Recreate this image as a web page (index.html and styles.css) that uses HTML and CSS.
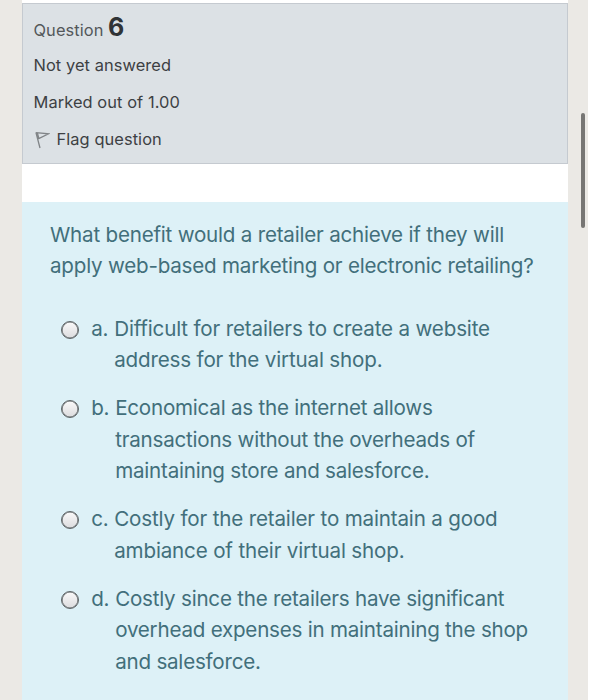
FILE: index.html
```html
<!DOCTYPE html>
<html lang="en">
<head>
<meta charset="utf-8">
<title>Question 6</title>
<link rel="stylesheet" href="styles.css">
</head>
<body>
<main class="page">
  <section class="info">
    <h3 class="info-title">Question <span class="number">6</span></h3>
    <div class="info-row state">Not yet answered</div>
    <div class="info-row grade">Marked out of 1.00</div>
    <div class="info-row flag">
      <svg class="flag-icon" viewBox="0 0 16 18" width="16" height="18"><path d="M1.9 1.3 6 17M3.4 1.8 5 8.2M2 1.6 14.6 2.8 5.2 7.4" fill="none" stroke="#808487" stroke-width="1.3"/></svg>
      <span>Flag question</span>
    </div>
  </section>
  <section class="formulation">
    <p class="prompt">What benefit would a retailer achieve if they will<br>apply web-based marketing or electronic retailing?</p>
    <div class="answers">
      <label class="answer"><input type="radio" name="q6" class="radio"><span class="letter">a.</span><span class="text short">Difficult for retailers to create a website<br>address for the virtual shop.</span></label>
      <label class="answer wide"><input type="radio" name="q6" class="radio"><span class="letter">b.</span><span class="text">Economical as the internet allows<br>transactions without the overheads of<br>maintaining store and salesforce.</span></label>
      <label class="answer"><input type="radio" name="q6" class="radio"><span class="letter">c.</span><span class="text short">Costly for the retailer to maintain a good<br>ambiance of their virtual shop.</span></label>
      <label class="answer wide"><input type="radio" name="q6" class="radio"><span class="letter">d.</span><span class="text">Costly since the retailers have significant<br>overhead expenses in maintaining the shop<br>and salesforce.</span></label>
    </div>
  </section>
</main>
<div class="scroll-thumb"></div>
</body>
</html>
```
FILE: styles.css
```css
* { box-sizing: border-box; }
html { background: #fff; overflow: hidden; }
body {
  margin: 0;
  width: 588px;
  height: 700px;
  overflow: hidden;
  background: #ebe9e5;
  font-family: Inter, "Liberation Sans", sans-serif;
}
.page {
  width: 546px;
  height: 700px;
  margin-left: 22px;
  padding-top: 3px;
  background: #fff;
}
.info {
  height: 161px;
  padding: 7px 10.5px 0;
  border: 1px solid #c5cad0;
  background: #dce1e5;
  color: #3d4043;
  font-size: 16.4px;
  letter-spacing: 0.08px;
}
.info-title {
  margin: 0;
  height: 36px;
  line-height: 38px;
  font-size: 16.4px;
  font-weight: 400;
  color: #53575a;
}
.number { font-size: 25px; font-weight: 700; line-height: 1; color: #303336; }
.info-row { height: 37px; line-height: 37px; white-space: nowrap; }
.flag { display: flex; align-items: center; gap: 7px; }
.formulation {
  height: 498px;
  margin-top: 38px;
  padding: 17px 0 0 28px;
  background: #ddf1f7;
  color: #426f7b;
  font-size: 20.6px;
  line-height: 31.3px;
  letter-spacing: -0.215px;
  white-space: nowrap;
}
.prompt { margin: 0; }
.answers { display: flex; flex-direction: column; gap: 17px; margin-top: 31.3px; padding-left: 11px; }
.answer { display: flex; align-items: flex-start; }
.radio {
  appearance: none;
  flex: none;
  width: 18px;
  height: 18px;
  margin: 8px 12.2px 0 0;
  border: 1.5px solid #5d6466;
  border-radius: 50%;
  background: linear-gradient(#fafafa, #dcdcde);
  box-shadow: inset 0 0 0 0.6px #5d6466;
}
.letter { width: 23px; }
.wide .letter { width: 24px; }
.short { letter-spacing: -0.17px; }
.wide .text { letter-spacing: -0.23px; }
.scroll-thumb {
  position: absolute;
  left: 581px;
  top: 113px;
  width: 4px;
  height: 115px;
  border-radius: 2px;
  background: #777674;
}
```
